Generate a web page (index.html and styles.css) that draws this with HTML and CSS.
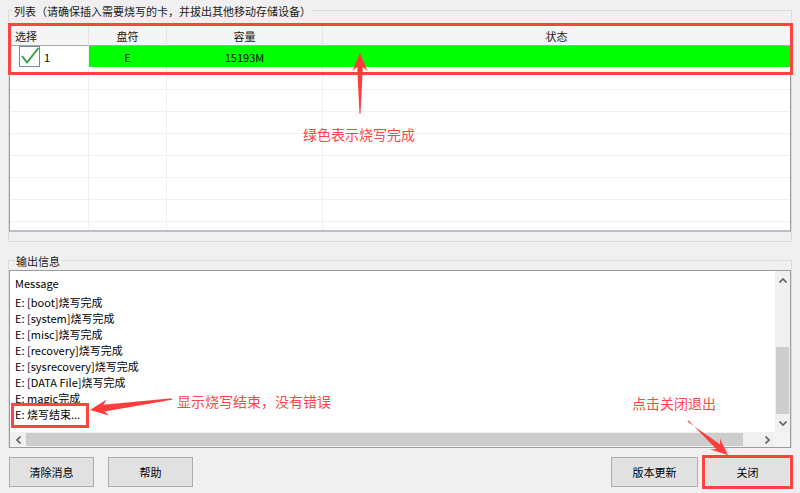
FILE: index.html
```html
<!DOCTYPE html>
<html lang="zh-CN">
<head>
    <meta charset="UTF-8">
    <title>烧写工具</title>
    <link rel="stylesheet" href="styles.css">
</head>
<body>
    <div class="window">
        <div class="group group-list">
            <span class="group-title">列表（请确保插入需要烧写的卡，并拔出其他移动存储设备）</span>
            <div class="listview">
                <div class="lv-row lv-head">
                    <div class="cell cell-left">选择</div>
                    <div class="cell">盘符</div>
                    <div class="cell">容量</div>
                    <div class="cell">状态</div>
                </div>
                <div class="lv-row lv-done">
                    <div class="cell cell-left cell-check">
                        <svg class="check" width="21" height="21" viewBox="0 0 21 21">
                            <rect x="0.5" y="0.5" width="20" height="20" fill="#fff" stroke="#6f8aa8"/>
                            <polyline points="3,10 8,16.5 19.5,2" fill="none" stroke="#35a043" stroke-width="2"/>
                        </svg>
                        <span>1</span>
                    </div>
                    <div class="cell">E</div>
                    <div class="cell">15193M</div>
                    <div class="cell"></div>
                </div>
                <div class="lv-row"><div class="cell"></div><div class="cell"></div><div class="cell"></div><div class="cell"></div></div>
                <div class="lv-row"><div class="cell"></div><div class="cell"></div><div class="cell"></div><div class="cell"></div></div>
                <div class="lv-row"><div class="cell"></div><div class="cell"></div><div class="cell"></div><div class="cell"></div></div>
                <div class="lv-row"><div class="cell"></div><div class="cell"></div><div class="cell"></div><div class="cell"></div></div>
                <div class="lv-row"><div class="cell"></div><div class="cell"></div><div class="cell"></div><div class="cell"></div></div>
                <div class="lv-row"><div class="cell"></div><div class="cell"></div><div class="cell"></div><div class="cell"></div></div>
                <div class="lv-row"><div class="cell"></div><div class="cell"></div><div class="cell"></div><div class="cell"></div></div>
                <div class="lv-row"><div class="cell"></div><div class="cell"></div><div class="cell"></div><div class="cell"></div></div>
                <div class="lv-row"><div class="cell"></div><div class="cell"></div><div class="cell"></div><div class="cell"></div></div>
            </div>
        </div>

        <div class="group group-log">
            <span class="group-title group-title-log">输出信息</span>
            <div class="log">
                <div class="log-text">
                    <div class="log-head">Message</div>
                    <div>E: [boot]烧写完成</div>
                    <div>E: [system]烧写完成</div>
                    <div>E: [misc]烧写完成</div>
                    <div>E: [recovery]烧写完成</div>
                    <div>E: [sysrecovery]烧写完成</div>
                    <div>E: [DATA File]烧写完成</div>
                    <div>E: magic完成</div>
                    <div>E: 烧写结束...</div>
                </div>
                <div class="vscroll">
                    <div class="sb-btn">
                        <svg width="8" height="5" viewBox="0 0 8 5"><polyline points="0.5,4.5 4,1 7.5,4.5" fill="none" stroke="#606060" stroke-width="1.6"/></svg>
                    </div>
                    <div class="sb-track"><div class="sb-thumb-v"></div></div>
                    <div class="sb-btn">
                        <svg width="8" height="5" viewBox="0 0 8 5"><polyline points="0.5,0.5 4,4 7.5,0.5" fill="none" stroke="#606060" stroke-width="1.6"/></svg>
                    </div>
                </div>
                <div class="hscroll">
                    <div class="sb-btn-h">
                        <svg width="5" height="8" viewBox="0 0 5 8"><polyline points="4.5,0.5 1,4 4.5,7.5" fill="none" stroke="#606060" stroke-width="1.6"/></svg>
                    </div>
                    <div class="sb-thumb-h"></div>
                    <div class="sb-track"></div>
                    <div class="sb-btn-h">
                        <svg width="5" height="8" viewBox="0 0 5 8"><polyline points="0.5,0.5 4,4 0.5,7.5" fill="none" stroke="#606060" stroke-width="1.6"/></svg>
                    </div>
                </div>
                <div class="sb-corner"></div>
            </div>
        </div>

        <div class="buttons">
            <div class="btn-group">
                <button class="btn">清除消息</button>
                <button class="btn">帮助</button>
            </div>
            <div class="btn-group btn-group-right">
                <button class="btn btn-wide">版本更新</button>
                <button class="btn btn-close">关闭</button>
            </div>
        </div>

        <!-- annotations drawn over the screenshot -->
        <div class="annot">
            <div class="mark mark-list"></div>
            <div class="mark mark-log"></div>
            <div class="mark mark-close"></div>
            <span class="note note-green">绿色表示烧写完成</span>
            <span class="note note-end">显示烧写结束，没有错误</span>
            <span class="note note-close">点击关闭退出</span>
            <svg class="arrows" width="800" height="493" viewBox="0 0 800 493">
                <polygon points="360,53 367.5,71 362.8,67 360.5,114 359.5,114 357.2,67 352.5,71"/>
                <polygon points="90,410 108.8,415.6 104.5,411.4 172,399.8 171.8,398.2 103.4,404.8 106.6,399.6"/>
                <polygon points="728,455 710.2,449.6 716.2,448.9 688.6,420.4 687.4,421.6 720.2,444.6 720,438.4"/>
            </svg>
        </div>
    </div>
</body>
</html>
```

FILE: styles.css
```css
* {
    box-sizing: border-box;
    margin: 0;
    padding: 0;
    font-family: "Noto Sans CJK SC", sans-serif;
}

body {
    background-color: #f0f0f0;
    color: #000;
    font-size: 11px;
}

.window {
    position: relative;
    width: 800px;
    height: 493px;
    padding-top: 10px;
    overflow: hidden;
}

/* group boxes */
.group {
    position: relative;
    margin: 0 8px;
    border: 1px solid #dcdcdc;
}

.group-list {
    padding: 14px 0 9px;
}

.group-log {
    margin-top: 18px;
    padding-top: 9px;
    border-bottom: none;
}

.group-title {
    position: absolute;
    top: -7px;
    left: 4px;
    padding: 0 1px;
    background-color: #f0f0f0;
    line-height: 15px;
    color: #1a1a1a;
}

.group-title-log {
    left: 6px;
}

/* list view */
.listview {
    height: 207px;
    background: #fff;
    border: 1px solid #9b9ba3;
    border-bottom: 2px solid #bdbdc5;
    overflow: hidden;
}

.lv-row {
    display: grid;
    grid-template-columns: 79px 78px 156px 1fr;
    height: 22px;
}

.cell {
    display: flex;
    align-items: center;
    justify-content: center;
    border-right: 1px solid #f0f0f0;
    border-bottom: 1px solid #f0f0f0;
}

.cell:last-child {
    border-right: none;
}

.cell-left {
    justify-content: flex-start;
    padding-left: 5px;
}

.lv-head {
    height: 20px;
    background: #f5f5f5;
}

.lv-head .cell {
    border-right-color: #e3e3e3;
    border-bottom-color: #a8a8a8;
    color: #1a1a1a;
}

.lv-done .cell {
    background-color: #00ff00;
    border-right-color: #00ff00;
    border-bottom-color: #fff;
}

.lv-done .cell-check {
    background-color: #fff;
    border-right-color: #f0f0f0;
    padding-left: 9px;
    gap: 4px;
}

.check {
    display: block;
}

/* output log */
.log {
    display: grid;
    grid-template-columns: 1fr 15px;
    grid-template-rows: 161px 15px;
    height: 178px;
    background: #fff;
    border: 1px solid #9b9ba3;
}

.log-text {
    padding: 4px 5px 0;
    line-height: 16px;
    white-space: nowrap;
    overflow: hidden;
}

.log-head {
    margin-bottom: 3px;
}

.vscroll {
    display: flex;
    flex-direction: column;
    background: #f0f0f0;
}

.sb-btn {
    height: 18px;
    display: flex;
    align-items: center;
    justify-content: center;
}

.sb-track {
    flex: 1;
}

.sb-thumb-v {
    margin: 58px 1px 0;
    height: 67px;
    background: #cdcdcd;
}

.hscroll {
    display: flex;
    background: #f0f0f0;
}

.sb-btn-h {
    width: 16px;
    display: flex;
    align-items: center;
    justify-content: center;
}

.sb-thumb-h {
    width: 717px;
    margin: 1px 0;
    background: #cdcdcd;
}

.sb-corner {
    background: #f4f4f4;
}

/* buttons */
.buttons {
    display: flex;
    justify-content: space-between;
    margin-top: 9px;
    padding: 0 10px 0 9px;
}

.btn-group {
    display: flex;
    gap: 14px;
}

.btn-group-right {
    gap: 7px;
}

.btn {
    width: 85px;
    height: 30px;
    background-color: #e1e1e1;
    border: 1px solid #adadad;
    font-size: 11px;
    color: #000;
}

.btn-wide {
    width: 87px;
}

.btn-close {
    border-color: #f2f2f2;
}

/* annotations */
.annot {
    position: absolute;
    top: 0;
    left: 0;
    width: 800px;
    height: 493px;
    pointer-events: none;
}

.mark {
    position: absolute;
    border: 3px solid #ff4242;
}

.mark-list {
    left: 8px;
    top: 23px;
    width: 785px;
    height: 52px;
}

.mark-log {
    left: 11px;
    top: 403px;
    width: 78px;
    height: 25px;
}

.mark-close {
    left: 702px;
    top: 455px;
    width: 91px;
    height: 34px;
}

.note {
    position: absolute;
    font-size: 14px;
    line-height: 14px;
    color: #ff4646;
    white-space: nowrap;
}

.note-green {
    left: 303px;
    top: 127px;
}

.note-end {
    left: 177px;
    top: 394px;
}

.note-close {
    left: 632px;
    top: 396px;
}

.arrows {
    position: absolute;
    top: 0;
    left: 0;
}

.arrows polygon {
    fill: #ff3c3c;
}
```
